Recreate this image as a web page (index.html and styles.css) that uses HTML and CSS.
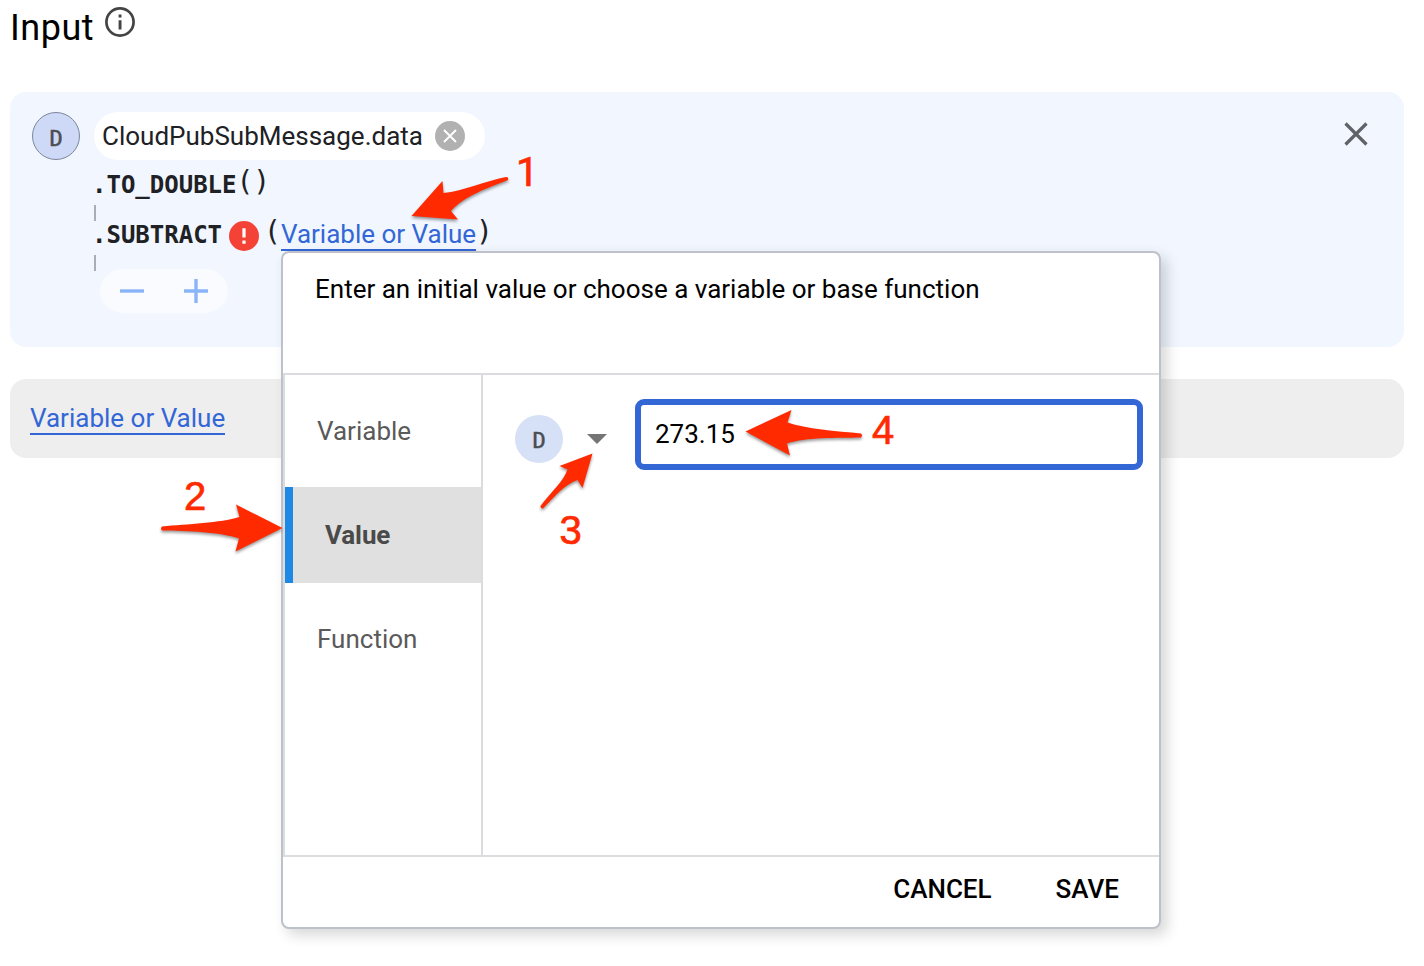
FILE: index.html
```html
<!DOCTYPE html>
<html lang="en">
<head>
<meta charset="utf-8">
<title>Input</title>
<link rel="stylesheet" href="styles.css">
</head>
<body>
<main class="page">
  <header class="heading">
    <h1 class="title">Input</h1>
    <svg class="info" viewBox="0 0 30 30"><circle cx="15" cy="15" r="13.6" fill="none" stroke="#444" stroke-width="2.7"/><path d="M13.6 7.6h2.9v2.9h-2.9zM13.6 13.2h2.9v9.2h-2.9z" fill="#444"/></svg>
  </header>

  <section class="card expression">
    <span class="type type-outlined">D</span>
    <div class="chain">
      <div class="chip"><span class="chip-text">CloudPubSubMessage.data</span>
        <svg class="chip-remove" viewBox="0 0 30 30"><circle cx="15" cy="15" r="15" fill="#b1b1b1"/><path d="M9 9l12 12M21 9L9 21" stroke="#fff" stroke-width="1.9"/></svg>
      </div>
      <div class="call call-first"><b>.TO_DOUBLE</b><span class="paren">()</span></div>
      <div class="link-bar"></div>
      <div class="call call-second"><b>.SUBTRACT</b>
        <svg class="error" viewBox="0 0 30 30"><circle cx="15" cy="15" r="15" fill="#f44336"/><path d="M13.4 7.3h3.2v9.200h-3.200zM13.4 19.5h3.2v3.2h-3.2z" fill="#fff"/></svg>
        <span class="paren">(</span><a class="slot">Variable or Value</a><span class="paren">)</span>
      </div>
      <div class="link-bar"></div>
      <div class="stepper">
        <svg viewBox="0 0 24 24"><path d="M0 12h24" stroke="#8ab4f8" stroke-width="3.4"/></svg>
        <svg viewBox="0 0 24 24"><path d="M0 12h24M12 0v24" stroke="#8ab4f8" stroke-width="3.4"/></svg>
      </div>
    </div>
    <svg class="close" viewBox="0 0 24 24"><path d="M1.500 1.500l21 21M22.500 1.500l-21 21" stroke="#5f6368" stroke-width="3.2"/></svg>
  </section>

  <section class="card output"><a class="slot">Variable or Value</a></section>
</main>

<div class="dialog">
  <div class="dialog-head">Enter an initial value or choose a variable or base function</div>
  <div class="dialog-body">
    <nav class="tabs">
      <div class="tab">Variable</div>
      <div class="tab tab-active">Value</div>
      <div class="tab">Function</div>
    </nav>
    <div class="pane">
      <span class="type">D</span>
      <svg class="caret" viewBox="0 0 20 10"><path d="M0 0h20L10 10z" fill="#757575"/></svg>
      <div class="field">273.15</div>
    </div>
  </div>
  <div class="dialog-foot"><span>CANCEL</span><span>SAVE</span></div>
</div>

<svg class="notes" viewBox="0 0 1424 966">
  <g class="arrows">
    <path d="M411.500 216L442.500 181L443.500 193C464 191 485 181 506 177Q509 177 508 180C488 188 464 196 451 211L458 219.500Z"/>
    <path d="M282.500 528L236 504.500L239.500 517C220 523 188 524 162 526.500Q160 528.500 162 530.500C188 531 220 532 239 538.500L235.500 551.500Z"/>
    <path d="M592.500 453.500L559.500 466L567.500 469.500C564 481 550 493 540.500 506Q540.500 508.500 543 508.500C553 498 565 484 577.500 480L582.500 488Z"/>
    <path d="M745.500 431.500L791.500 410L787.500 422.500C806 429 836 431 861 433.500Q863 435.500 861 437.500C836 438 806 437 787 443.500L790 455.500Z"/>
  </g>
  <g class="digits">
    <text class="one" x="516" y="186">1</text>
    <text x="184" y="510">2</text>
    <text x="559.500" y="544">3</text>
    <text x="872" y="444">4</text>
  </g>
</svg>
</body>
</html>
```

FILE: styles.css
```css
* { box-sizing: border-box; }
body {
  margin: 0;
  width: 1424px;
  height: 966px;
  position: relative;
  overflow: hidden;
  background: #fff;
  color: #202124;
  font-family: Roboto, sans-serif;
  font-size: 26px;
  line-height: 32px;
}
.page { padding: 0 20px 0 10px; }
svg { display: block; flex: none; }

.heading { display: flex; height: 92px; gap: 11.5px; }
.title {
  margin: 0;
  padding-top: 7px;
  width: 83px;
  font-size: 36px;
  line-height: 43px;
  font-weight: 400;
  letter-spacing: 0.5px;
  color: #000;
}
.info { width: 30px; height: 30px; margin-top: 7px; }

.card { border-radius: 16px; }
.expression {
  display: flex;
  align-items: flex-start;
  height: 255px;
  padding: 20px 36px 0 22px;
  background: #f1f6ff;
}
.type {
  flex: none;
  width: 48px;
  height: 48px;
  border-radius: 50%;
  background: #d6e0f6;
  color: #4a4d52;
  font: 22px/52px "DejaVu Sans Mono", monospace;
  -webkit-text-stroke: 0.5px #4a4d52;
  text-align: center;
}
.type-outlined { background: #cdd9f6; border: 1px solid #7d879c; }
.chain { margin-left: 14px; flex: 1; }
.chip {
  display: flex;
  align-items: center;
  width: 391px;
  height: 48px;
  padding-left: 8px;
  border-radius: 24px;
  background: #fff;
}
.chip-text { width: 333px; }
.chip-remove { width: 30px; height: 30px; }
.call {
  display: flex;
  margin-left: -2px;
  font: 24px/32px "DejaVu Sans Mono", monospace;
}
.call b { font-weight: 700; }
.paren { font-size: 28px; line-height: 26px; }
.call-first { padding-top: 9px; height: 45px; }
.link-bar { width: 2px; height: 16px; background: #a9adb6; }
.call-second { height: 34px; }
.call-second b,
.call-second .paren,
.call-second .slot { margin-top: -2px; }
.error { width: 30px; height: 30px; margin: 0 5px 0 7px; }
.slot {
  display: block;
  width: 195px;
  height: 32px;
  border-bottom: 2px solid #3367d6;
  color: #3367d6;
  font: 26px/30px Roboto, sans-serif;
  white-space: nowrap;
}
.stepper {
  display: flex;
  align-items: center;
  gap: 40px;
  width: 128px;
  height: 44px;
  margin: -2px 0 0 6px;
  padding-left: 20px;
  border-radius: 22px;
  background: #fafbff;
}
.stepper svg { width: 24px; height: 24px; }
.close { width: 24px; height: 24px; margin-top: 10px; }
.output {
  height: 79px;
  margin-top: 32px;
  padding: 24px 20px;
  background: #eee;
}

.dialog {
  position: absolute;
  left: 281px;
  top: 251px;
  display: flex;
  flex-direction: column;
  width: 880px;
  height: 678px;
  border: 2px solid #bdc1ca;
  border-radius: 8px;
  background: #fff;
  box-shadow: 6px 6px 14px rgba(0, 0, 0, 0.16);
}
.dialog-head {
  height: 120px;
  padding: 20px 32px;
  color: #000;
  white-space: nowrap;
}
.dialog-body {
  display: flex;
  height: 484px;
  border: 2px solid #dadce0;
  border-right: 0;
}
.tabs {
  width: 198px;
  border-right: 2px solid #dadce0;
  color: #5a5a5a;
}
.tab { height: 112px; padding: 40px 32px; }
.tab-active {
  height: 96px;
  padding: 32px 32px;
  border-left: 8px solid #1e88e5;
  background: #e0e0e0;
  color: #4a4a4a;
  font-weight: 700;
  letter-spacing: -0.1px;
}
.pane { display: flex; align-items: flex-start; padding: 24px 0 0 32px; }
.pane .type { margin-top: 16px; }
.caret { width: 20px; height: 10px; margin: 35px 28px 0 24px; }
.field {
  width: 508px;
  height: 71px;
  padding: 13px 14px;
  border: 6px solid #3367d6;
  border-radius: 9px;
  color: #000;
}
.dialog-foot {
  display: flex;
  justify-content: flex-end;
  gap: 64px;
  padding: 16px 40px 0 0;
  color: #000;
  font-weight: 500;
}

.notes { position: absolute; left: 0; top: 0; width: 1424px; height: 966px; }
.arrows { fill: #ff2a00; filter: drop-shadow(0 2px 1.5px rgba(0, 0, 0, 0.4)); }
.digits { fill: #ff2a00; stroke: #ff2a00; stroke-width: 0.7px; font: 40px "Liberation Sans", sans-serif; }
.one { font-family: Roboto, sans-serif; }
```
